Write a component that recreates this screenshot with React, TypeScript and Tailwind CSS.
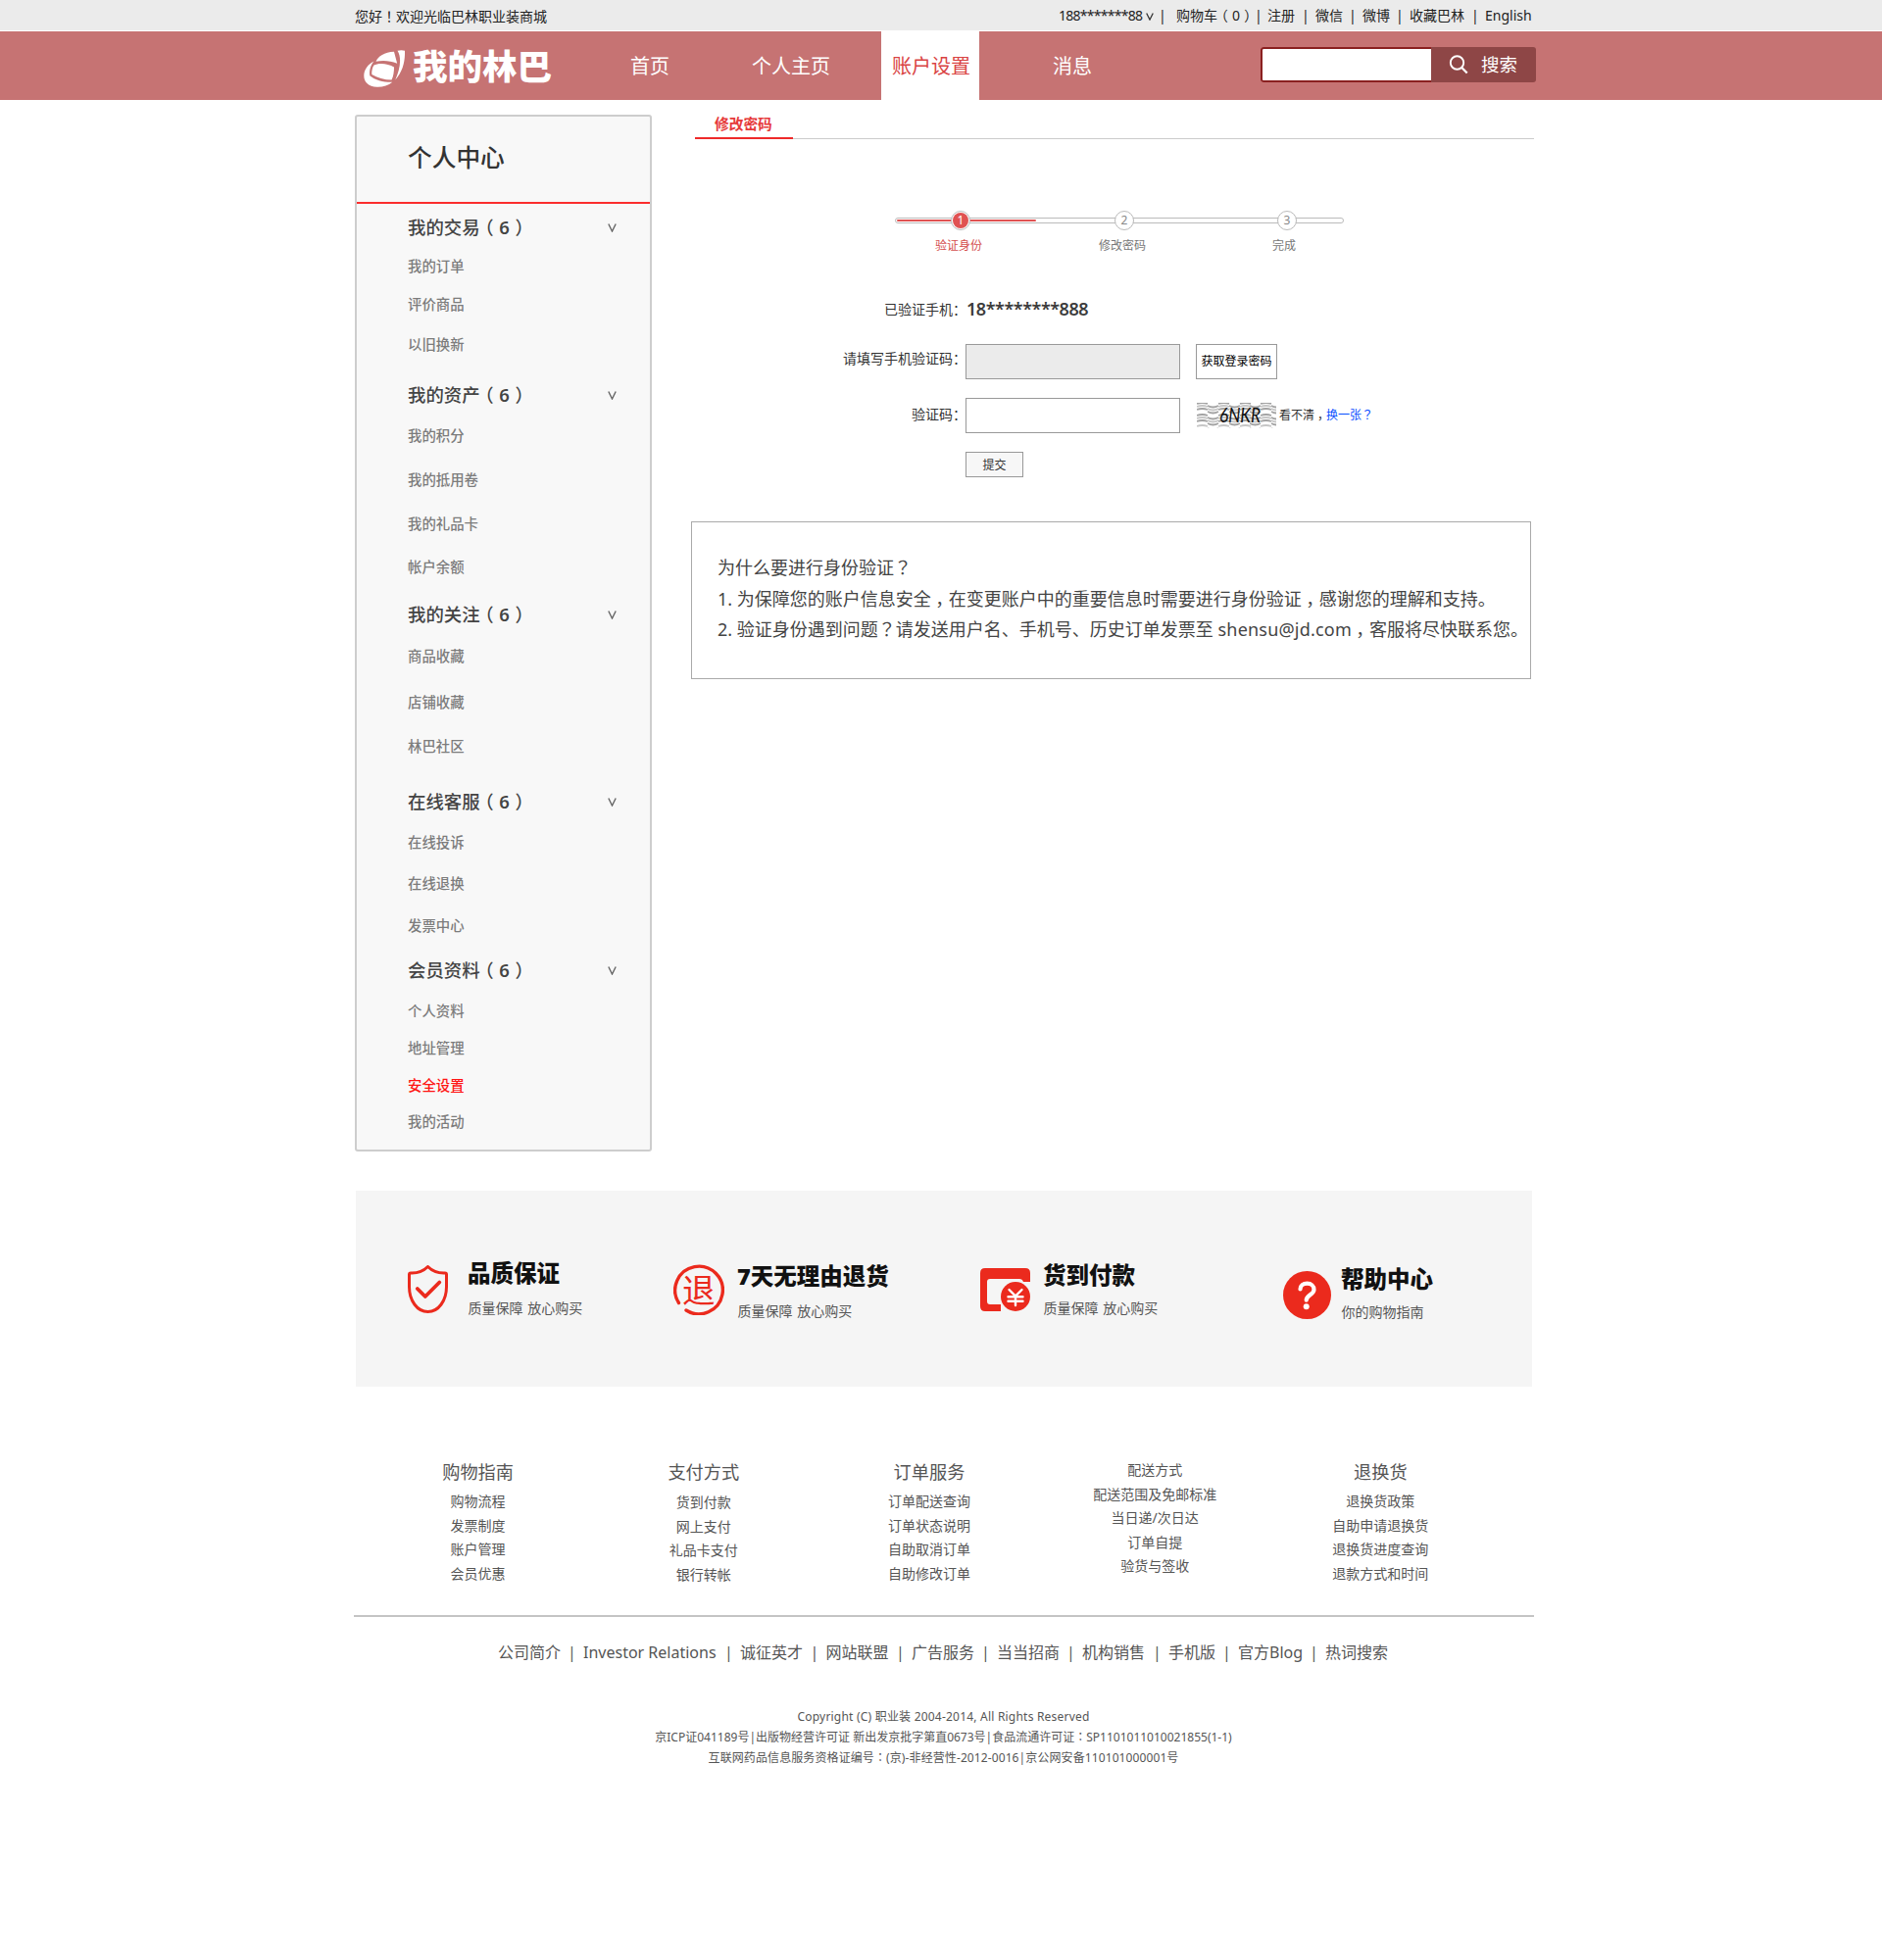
import React from "react";

type Row = { text: string; gap: string; head?: boolean; active?: boolean };

const sideRows: Row[] = [
  { text: "我的交易", gap: "mt-[14px]", head: true },
  { text: "我的订单", gap: "mt-[19px]" },
  { text: "评价商品", gap: "mt-[19px]" },
  { text: "以旧换新", gap: "mt-[21px]" },
  { text: "我的资产", gap: "mt-8", head: true },
  { text: "我的积分", gap: "mt-[21px]" },
  { text: "我的抵用卷", gap: "mt-[25px]" },
  { text: "我的礼品卡", gap: "mt-[25px]" },
  { text: "帐户余额", gap: "mt-6" },
  { text: "我的关注", gap: "mt-[29px]", head: true },
  { text: "商品收藏", gap: "mt-[22px]" },
  { text: "店铺收藏", gap: "mt-[27px]" },
  { text: "林巴社区", gap: "mt-[25px]" },
  { text: "在线客服", gap: "mt-[37px]", head: true },
  { text: "在线投诉", gap: "mt-[21px]" },
  { text: "在线退换", gap: "mt-[22px]" },
  { text: "发票中心", gap: "mt-[23px]" },
  { text: "会员资料", gap: "mt-[26px]", head: true },
  { text: "个人资料", gap: "mt-[21px]" },
  { text: "地址管理", gap: "mt-[18px]" },
  { text: "安全设置", gap: "mt-[18px]", active: true },
  { text: "我的活动", gap: "mt-[17px]" },
];

/* Sets full-width punctuation in the middle of its em box. */
function Cn({ children }: { children: string }) {
  return (
    <>
      {children.split(/([！？：，])/).map((part, i) => {
        if (part === "，") {
          return (
            <span key={i} className="inline-block w-[1em] pl-[0.24em] leading-none [font-feature-settings:'halt']">
              ，
            </span>
          );
        }
        if (/^[！？：]$/.test(part)) {
          return (
            <span key={i} lang="zh-TW" className="font-['Noto_Sans_CJK_TC',sans-serif] leading-none">
              {part}
            </span>
          );
        }
        return part;
      })}
    </>
  );
}

function Paren({ value, strong }: { value: string; strong?: boolean }) {
  return (
    <span>
      <span className="mr-[0.31em] ml-[0.26em] [font-feature-settings:'halt']">（</span>
      <span className={strong ? "font-semibold" : ""}>{value}</span>
      <span className="ml-[0.31em] [font-feature-settings:'halt']">）</span>
    </span>
  );
}

function Chevron({ className }: { className: string }) {
  return (
    <svg viewBox="0 0 9 9" className={className} fill="none" stroke="currentColor" strokeWidth="1.4">
      <path d="M.8.5 4.5 8 8.2.5" />
    </svg>
  );
}

function TopBar() {
  return (
    <div className="h-[31px] bg-[#ebebeb] text-sm text-[#222]">
      <div className="ml-[362px] flex w-[1210px] whitespace-nowrap">
        <span className="w-[718px] leading-[34px]">
          <Cn>您好！欢迎光临巴林职业装商城</Cn>
        </span>
        <div className="flex leading-8">
          <span className="w-[89px] tracking-[-0.72px]">188*******88</span>
          <span className="flex w-[13px] items-center">
            <Chevron className="h-2 w-2 text-[#333]" />
          </span>
          <span className="w-[18px]">|</span>
          <span className="w-[42px]">购物车</span>
          <span className="w-[38px]">
            <Paren value="0" />
          </span>
          <span className="w-[13px]">|</span>
          <span className="w-[35px]">注册</span>
          <span className="w-[14px]">|</span>
          <span className="w-[34px]">微信</span>
          <span className="w-[14px]">|</span>
          <span className="w-[34px]">微博</span>
          <span className="w-[14px]">|</span>
          <span className="w-[63px]">收藏巴林</span>
          <span className="w-[14px]">|</span>
          <span>English</span>
        </div>
      </div>
    </div>
  );
}

function Header() {
  return (
    <header className="mt-px flex h-[70px] items-start bg-[#c67373] pl-[371px] text-xl leading-[72px] whitespace-nowrap text-white">
      <div className="flex h-[70px] w-[272px]">
        <svg viewBox="0 0 42 38" className="mt-[19px] h-[38px] w-[42px]" fill="#fff">
          <path d="M12.500 11.800C15 6.500 21 2.200 31 1.800L34.200 13.800C27 11 20 10.500 12.500 11.800Z" />
          <path d="M10.500 15.500C15 12.800 25 13.500 31 17.500 31 22 30.500 26.500 28.500 30.600 21 30.500 14 28.500 8.300 25 8 21.500 8.800 18 10.500 15.500Z" />
          <path d="M10.500 11.500C7 15.500 5.500 21 6.300 26.200 12 31 20 33 29.300 32.800 25 36.500 19.500 38 13.500 37.800 5 37.500.3 32.500.3 26.500.3 20 4.500 14.500 10.500 11.500Z" />
          <path d="M34.500.8Q38.500-.2 42 .8C42.300 12 40 21.500 32.300 30.500 36.500 21 39.500 8.500 34.500.8Z" />
        </svg>
        <span className="ml-2 text-[35.5px] leading-[71px] font-black">我的林巴</span>
      </div>
      <span className="w-[124px]">首页</span>
      <span className="w-[132px]">个人主页</span>
      <span className="h-[70px] w-[100px] bg-white pl-[11px] text-[#d94343]">账户设置</span>
      <span className="w-[287px] pl-[75px]">消息</span>
      <div className="mt-4 flex h-9 w-[281px] overflow-hidden rounded-[3px] leading-9">
        <div className="w-[174px] rounded-l-[3px] border-2 border-r-0 border-[#8a2020] bg-white" />
        <div className="flex w-[107px] items-center bg-[#8e4646] pl-[18px] text-[18.500px]">
          <svg viewBox="0 0 20 20" className="h-5 w-5" fill="none" stroke="#fff" strokeWidth="1.900">
            <circle cx="8.500" cy="8" r="6.700" />
            <path d="m13.300 13 5.400 5.600" strokeWidth="2.200" />
          </svg>
          <span className="ml-[13px]">搜索</span>
        </div>
      </div>
    </header>
  );
}

function Sidebar() {
  return (
    <aside className="h-[1058px] w-[303px] rounded-[3px] border-2 border-[#cdcdcd] bg-[#f8f8f8]">
      <h1 className="h-[89px] border-b-2 border-[#fb2d2d] pl-[52px] text-[24.700px] leading-[84px] font-medium text-[#333]">个人中心</h1>
      <ul className="pl-[52px] whitespace-nowrap">
        {sideRows.map((r) =>
          r.head ? (
            <li key={r.text} className={`flex h-5 items-center text-[18.400px] leading-5 font-medium text-[#444] ${r.gap}`}>
              <span className="w-[204px]">
                {r.text}
                <Paren value="6" strong />
              </span>
              <Chevron className="h-[9px] w-[9px] text-[#666]" />
            </li>
          ) : (
            <li key={r.text} className={`h-5 text-[14.400px] leading-[21px] font-medium ${r.active ? "text-[#ff1414]" : "text-[#7c7c7c]"} ${r.gap}`}>
              {r.text}
            </li>
          ),
        )}
      </ul>
    </aside>
  );
}

function StepDot({ n, pos, active }: { n: string; pos: string; active?: boolean }) {
  return (
    <span className={`absolute -top-[8px] flex h-5 w-5 items-center justify-center rounded-full border border-[#bbb] bg-white ${pos}`}>
      <span className={`flex h-4 w-4 items-center justify-center rounded-full text-xs leading-none ${active ? "bg-[#e05252] text-white" : "text-[#888]"}`}>{n}</span>
    </span>
  );
}

function Stepper() {
  return (
    <div className="ml-[204px] w-[458px] pt-[80px]">
      <div className="relative h-[6px] rounded-full border border-[#bbb] bg-white">
        <div className="mt-px ml-px h-[2px] w-[142px] rounded-full bg-[#e05252]" />
        <StepDot n="1" pos="left-[56px]" active />
        <StepDot n="2" pos="left-[223px]" />
        <StepDot n="3" pos="left-[389px]" />
      </div>
      <div className="mt-[13px] flex pl-[41px] text-xs leading-5 text-[#777]">
        <span className="w-[167px] text-[#d44e4e]">验证身份</span>
        <span className="w-[177px]">修改密码</span>
        <span>完成</span>
      </div>
    </div>
  );
}

function Captcha() {
  const cols = [0, 1, 2, 3, 4, 5, 6, 7];
  return (
    <svg viewBox="0 0 81 26" className="h-[26px] w-[81px]" fill="none">
      {cols.map((i) => {
        const x = i * 11 - (i > 4 ? 1 : 0);
        const off = i % 2 ? 1 : -1;
        const bend = i % 2 ? 3 : -2;
        return [0, 3, 6, 12, 15, 18, 23].map((y) => (
          <path
            key={`${i}-${y}`}
            d={`M${x} ${y + off + 2}q5.500 ${bend} 11 0`}
            stroke={y % 2 ? "#c6c6c6" : "#a2a2a2"}
            strokeWidth="1.800"
          />
        ));
      })}
      <text x="23" y="20" textLength="42" lengthAdjust="spacingAndGlyphs" fill="#111" fontSize="21" className="font-['Lato',sans-serif] italic">
        6NKR
      </text>
    </svg>
  );
}

function Form() {
  const label = "w-[125px] -mr-px shrink-0 flex justify-end";
  return (
    <div className="ml-[152px] text-sm whitespace-nowrap text-[#333]">
      <div className="mt-10 flex h-[29px] items-center leading-[26px]">
        <span className={label}>已验证手机：</span>
        <span className="ml-px text-[18px] leading-[27px] font-semibold tracking-[-0.46px] text-[#3c3c3c]">18********888</span>
      </div>
      <div className="mt-[21px] flex h-9">
        <span className={`${label} leading-[30px]`}>请填写手机验证码：</span>
        <div className="h-9 w-[219px] border border-[#999] bg-[#ebebeb]" />
        <button className="ml-4 h-9 w-[83px] border border-[#999] text-center text-xs text-black">获取登录密码</button>
      </div>
      <div className="mt-[19px] flex h-9">
        <span className={`${label} leading-[34px]`}>验证码：</span>
        <div className="h-9 w-[219px] border border-[#999] bg-white" />
        <div className="ml-[17px] flex items-center text-xs">
          <Captcha />
          <span className="ml-[3px]">
            <Cn>看不清，</Cn>
          </span>
          <a className="text-[#0a50ff]">
            <Cn>换一张？</Cn>
          </a>
        </div>
      </div>
      <button className="mt-[19px] ml-[124px] block h-[26px] w-[59px] border border-[#999] bg-[#f7f7f7] text-center text-xs leading-[25px]">提交</button>
    </div>
  );
}

function Notice() {
  return (
    <div className="-ml-1 mt-[45px] h-[161px] w-[857px] border border-[#aaa] pt-[31px] pl-[26px] text-[18px] leading-[31.500px] whitespace-nowrap text-[#444]">
      <p>
        <Cn>为什么要进行身份验证？</Cn>
      </p>
      <p>
        <Cn>1. 为保障您的账户信息安全，在变更账户中的重要信息时需要进行身份验证，感谢您的理解和支持。</Cn>
      </p>
      <p>
        <Cn>2. 验证身份遇到问题？请发送用户名、手机号、历史订单发票至 </Cn>
        <span className="tracking-[0.2px]">shensu@jd.com</span>
        <Cn>，客服将尽快联系您。</Cn>
      </p>
    </div>
  );
}

function ServiceText({ title, sub, gap }: { title: string; sub: string; gap: string }) {
  return (
    <div className="whitespace-nowrap">
      <div className="-mt-px pb-px text-[23.500px] leading-6 font-black text-[#111]">{title}</div>
      <div className={`pl-[0.5px] text-sm leading-5 [word-spacing:1px] text-[#555] ${gap}`}>{sub}</div>
    </div>
  );
}

function Services() {
  return (
    <section className="mt-10 ml-[363px] flex h-[200px] w-[1200px] items-start bg-[#f5f5f5] pl-[53px]">
      <div className="flex w-[271px] pt-[73px]">
        <svg viewBox="0 0 41 49" className="mt-[3px] h-[49px] w-[41px]" fill="none" stroke="#eb2a1d" strokeWidth="3" strokeLinejoin="round" strokeLinecap="round">
          <path d="M20.500 1.500C16 6 10 8.300 3 8q-1.500 0-1.500 1.500V22c0 14 8 25.500 19 25.500S39.500 36 39.500 22V9.500Q39.500 8 38 8C31 8.300 25 6 20.500 1.500Z" />
          <path d="m9.800 24 8 8 14.500-14.500" strokeWidth="3.800" />
        </svg>
        <div className="ml-5">
          <ServiceText title="品质保证" sub="质量保障 放心购买" gap="mt-[13px]" />
        </div>
      </div>
      <div className="flex w-[313px] pt-[75px]">
        <svg viewBox="0 0 52 52" className="h-[52px] w-[52px]" fill="none" stroke="#eb2a1d" strokeWidth="3.400" strokeLinecap="round">
          <path d="M5.500 39.500A24.300 24.300 0 1 1 13 47" />
          <text x="9" y="38.500" fontSize="33.500" fill="#eb2a1d" stroke="none">
            退
          </text>
        </svg>
        <div className="ml-[13px] mt-px">
          <ServiceText title="7天无理由退货" sub="质量保障 放心购买" gap="mt-[13px]" />
        </div>
      </div>
      <div className="flex w-[309px] pt-[75px]">
        <svg viewBox="0 0 51 44" className="mt-1 h-[44px] w-[51px]" fill="#eb2a1d">
          <path d="M5 0h41q5 0 5 5v9h-7q-1-3-4-3H10q-3 0-3 3v20q0 3 3 3h11v7H5q-5 0-5-5V5q0-5 5-5Z" />
          <circle cx="36" cy="29" r="15" />
          <path d="m29.500 22 6.500 6.500 6.500-6.500M36 28.500V38M28.500 29.300h15M28.500 33.700h15" fill="none" stroke="#fff" strokeWidth="2.400" strokeLinecap="round" />
        </svg>
        <div className="ml-[13px]">
          <ServiceText title="货到付款" sub="质量保障 放心购买" gap="mt-[11px]" />
        </div>
      </div>
      <div className="flex pt-[79px]">
        <svg viewBox="0 0 49 49" className="mt-[3px] h-[49px] w-[49px]" fill="none">
          <circle cx="24.500" cy="24.500" r="24.500" fill="#eb2a1d" />
          <path d="M17.500 18.500c0-4 3-5.800 7-5.800 4.300 0 7 2.600 7 6.200 0 5-7.800 5.800-7.800 10.800" stroke="#fff" strokeWidth="4.200" strokeLinecap="round" />
          <circle cx="23.700" cy="36.300" r="3" fill="#fff" />
        </svg>
        <div className="ml-[10px]">
          <ServiceText title="帮助中心" sub="你的购物指南" gap="mt-[11px]" />
        </div>
      </div>
    </section>
  );
}

const columns = [
  { title: "购物指南", pad: "pt-0", items: ["购物流程", "发票制度", "账户管理", "会员优惠"] },
  { title: "支付方式", pad: "pt-px", items: ["货到付款", "网上支付", "礼品卡支付", "银行转帐"] },
  { title: "订单服务", pad: "pt-0", items: ["订单配送查询", "订单状态说明", "自助取消订单", "自助修改订单"] },
  { title: "", pad: "pt-0", items: ["配送方式", "配送范围及免邮标准", "当日递/次日达", "订单自提", "验货与签收"] },
  { title: "退换货", pad: "pt-0", items: ["退换货政策", "自助申请退换货", "退换货进度查询", "退款方式和时间"] },
];

const links: [string, string][] = [
  ["公司简介", "w-[71px]"],
  ["Investor Relations", "w-[144px]"],
  ["诚征英才", "w-[71.5px]"],
  ["网站联盟", "w-[71.5px]"],
  ["广告服务", "w-[71px]"],
  ["当当招商", "w-[71px]"],
  ["机构销售", "w-[72px]"],
  ["手机版", "w-[55px]"],
  ["官方Blog", "w-[73px]"],
  ["热词搜索", "w-[64px]"],
];

function Footer() {
  return (
    <footer className="text-[#555]">
      <div className="mt-[73px] ml-[372.5px] flex w-[1151px] text-center text-sm leading-[24.500px] whitespace-nowrap">
        {columns.map((c, i) => (
          <div key={i} className="w-[230.200px]">
            {c.title && <h3 className="h-8 text-[18.200px] leading-[29px]">{c.title}</h3>}
            <div className={c.pad}>
              {c.items.map((t) => (
                <p key={t}>{t}</p>
              ))}
            </div>
          </div>
        ))}
      </div>
      <div className="mt-[29px] ml-[361px] h-[2px] w-[1204px] bg-[#c4c4c4]" />
      <div className="mt-5 ml-[508px] flex text-base leading-8 whitespace-nowrap">
        {links.map(([t, w], i) => (
          <React.Fragment key={t}>
            {i > 0 && <span className="w-4">|</span>}
            <span className={w}>{t}</span>
          </React.Fragment>
        ))}
      </div>
      <div className="mt-[39px] ml-[362px] w-[1201px] text-center text-xs leading-[21px]">
        <p className="tracking-[0.21px]">Copyright (C) 职业装 2004-2014, All Rights Reserved</p>
        <p>
          <Cn>京ICP证041189号|出版物经营许可证 新出发京批字第直0673号|食品流通许可证：SP1101011010021855(1-1)</Cn>
        </p>
        <p className="tracking-[0.1px]">
          <Cn>互联网药品信息服务资格证编号：(京)-非经营性-2012-0016|京公网安备110101000001号</Cn>
        </p>
      </div>
    </footer>
  );
}

export default function App() {
  return (
    <div lang="zh-CN" className="h-[2000px] w-[1920px] overflow-hidden bg-white font-['Noto_Sans','Noto_Sans_CJK_SC',sans-serif]">
      <TopBar />
      <Header />
      <div className="mt-[15px] ml-[362px] flex">
        <Sidebar />
        <main className="ml-11 w-[856px]">
          <div className="flex h-[25px] border-b border-[#ccc]">
            <div className="h-[25px] w-[100px] border-b-2 border-[#ee2a2a] pl-5 text-[14.700px] leading-[18px] font-bold text-[#e63a3a]">修改密码</div>
          </div>
          <Stepper />
          <Form />
          <Notice />
        </main>
      </div>
      <Services />
      <Footer />
    </div>
  );
}
